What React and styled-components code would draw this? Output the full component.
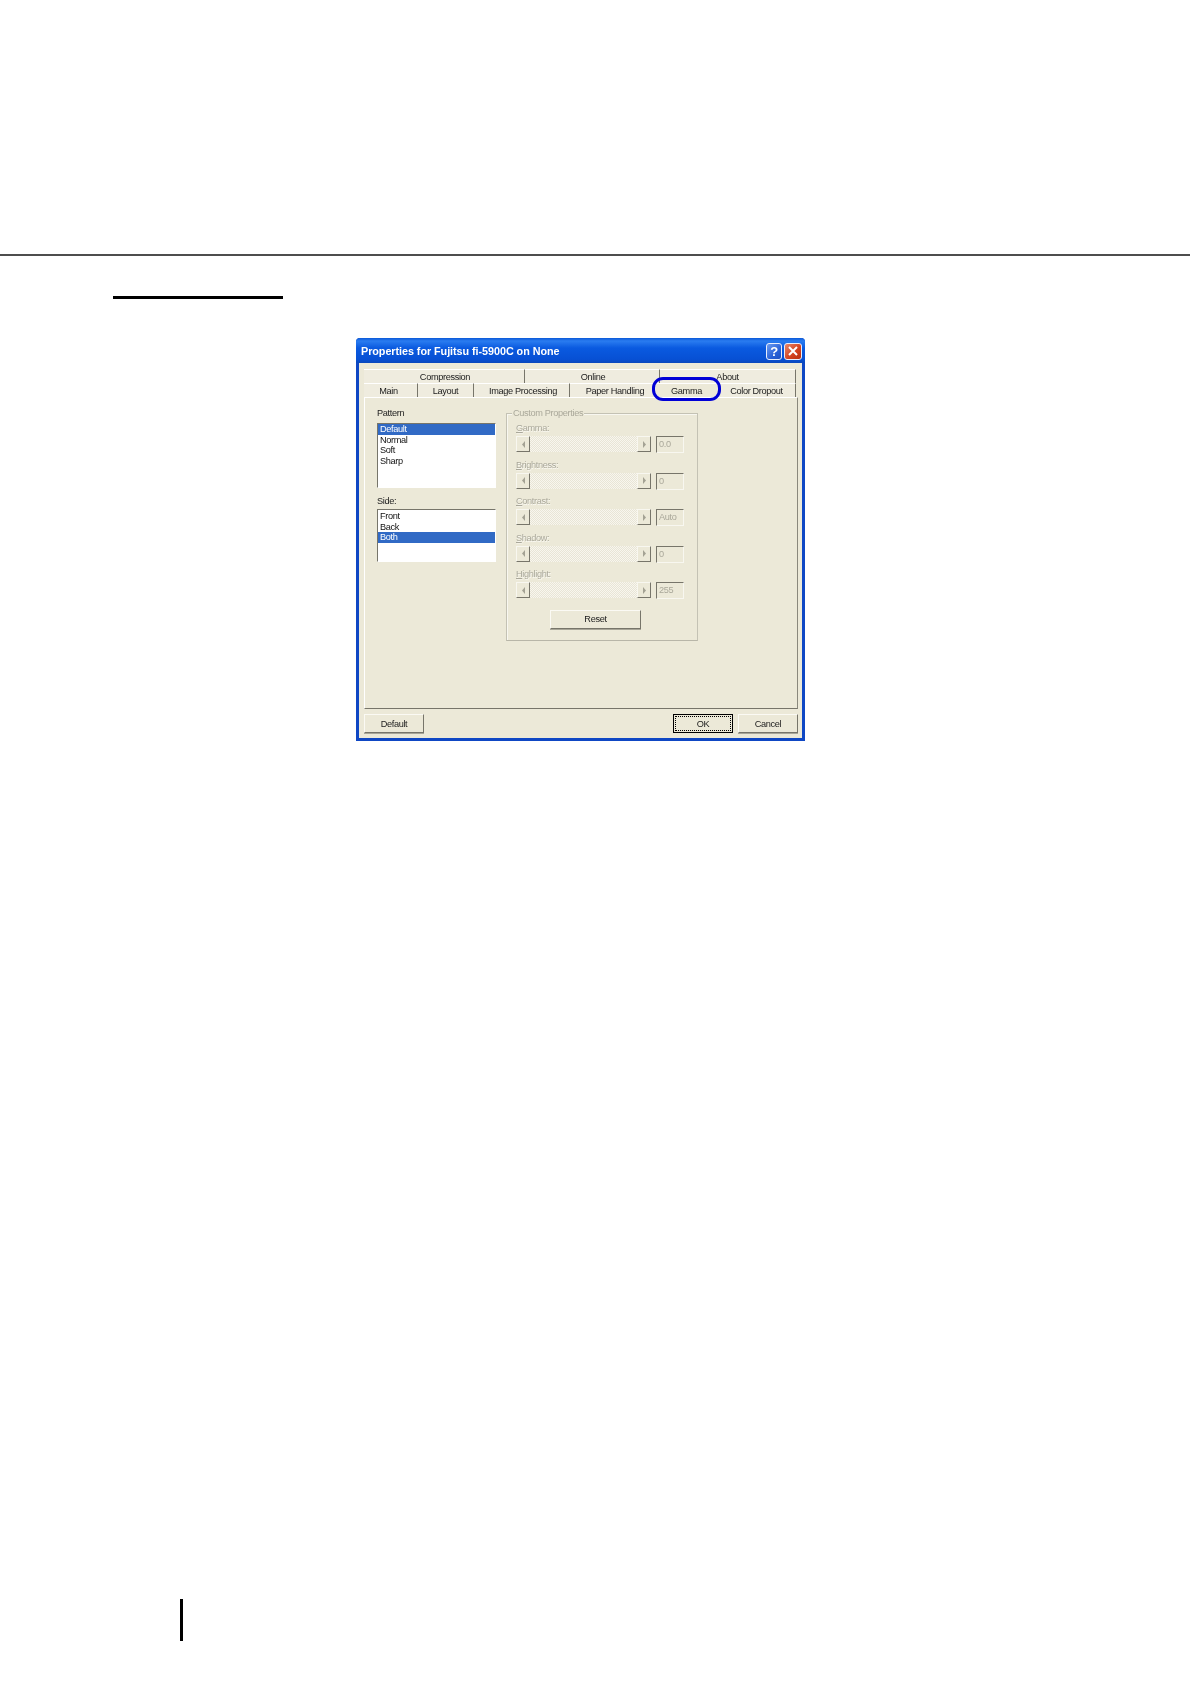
import React from 'react'
import styled, { createGlobalStyle } from 'styled-components'

const GlobalStyle = createGlobalStyle`
  html, body {
    margin: 0;
    padding: 0;
    background: #fff;
  }
`

const Page = styled.div`
  width: 1190px;
  height: 1684px;
  display: flex;
  flex-direction: column;
  padding-top: 254px;
  box-sizing: border-box;
  background: #fff;
  overflow: hidden;
`

const HeaderRule = styled.div`
  height: 2px;
  background: #4d4d4d;
`

const SectionRule = styled.div`
  width: 170px;
  height: 3px;
  margin: 40px 0 0 113px;
  background: #000;
`

const Dialog = styled.div`
  width: 449px;
  height: 403px;
  margin: 39px 0 0 356px;
  box-sizing: border-box;
  display: flex;
  flex-direction: column;
  background: #ece9d8;
  border: 3px solid #0f47c4;
  border-top: 0;
  border-radius: 4px 4px 0 0;
  font-family: "Liberation Sans", Arial, sans-serif;
  font-size: 9.2px;
  letter-spacing: -0.35px;
  color: #1c1c1c;
  filter: blur(0.4px);
`

const TitleBar = styled.div`
  height: 25px;
  margin: 0 -3px;
  padding: 1px 3px 0 5px;
  box-sizing: border-box;
  display: flex;
  align-items: center;
  justify-content: space-between;
  border-radius: 4px 4px 0 0;
  background: linear-gradient(#0a58d8 0%, #2a7cf0 12%, #0a5ae0 40%, #0750d4 85%, #0a48bc 100%);
`

const Title = styled.span`
  font-size: 10.8px;
  font-weight: 700;
  letter-spacing: -0.05px;
  color: #fff;
`

const TitleButtons = styled.div`
  display: flex;
  gap: 2px;
`

const TitleButton = styled.div`
  width: ${p => p.$wide ? 18 : 16}px;
  height: 17px;
  box-sizing: border-box;
  display: flex;
  align-items: center;
  justify-content: center;
  border: 1px solid #e8eefc;
  border-radius: 3px;
  background: ${p => p.$close ? 'linear-gradient(135deg, #e8886c, #d2401c 60%, #b83010)' : 'linear-gradient(135deg, #6c9cf0, #2a62d8 60%, #2050c0)'};
  color: #fff;
  font-size: 13px;
  font-weight: 700;
`

const Body = styled.div`
  flex: 1;
  display: flex;
  flex-direction: column;
  padding: 6px 4px 5px 5px;
`

const TabStrip = styled.div`
  position: relative;
`

const TabRow = styled.div`
  height: 14px;
  display: flex;
`

const Tab = styled.div`
  width: ${p => p.$w}px;
  box-sizing: border-box;
  padding: 1px ${p => p.$pr || 0}px 0 ${p => p.$pl || 0}px;
  line-height: 12px;
  text-align: center;
  background: ${p => p.$active ? 'transparent' : '#efecdf'};
  border-top: 1px solid #fff;
  border-right: ${p => p.$plain ? '0' : '1px solid #77756a'};
`

const Highlight = styled.div`
  position: absolute;
  left: 288px;
  top: 8px;
  width: 69px;
  height: 24px;
  box-sizing: border-box;
  border: 3.5px solid #0000d6;
  border-radius: 11px;
`

const Panel = styled.div`
  flex: 1;
  display: flex;
  gap: 10px;
  padding: 9px 0 0 12px;
  border: 1px solid #fff;
  border-right-color: #8a887c;
  border-bottom: 1px solid #77756a;
`

const Column = styled.div`
  width: 119px;
  display: flex;
  flex-direction: column;
`

const FieldLabel = styled.div`
  height: 12px;
  line-height: 12px;
  margin-top: ${p => p.$mt || 0}px;
`

const ListBox = styled.div`
  height: ${p => p.$h}px;
  box-sizing: border-box;
  margin-top: ${p => p.$mt}px;
  padding-top: ${p => p.$pt || 0}px;
  background: #fff;
  border: 1px solid #fff;
  border-top-color: #77756a;
  border-left-color: #77756a;
`

const ListRow = styled.div`
  height: 10.5px;
  line-height: 10.5px;
  padding-left: 2px;
  background: ${p => p.$selected ? '#316ac5' : 'transparent'};
  color: ${p => p.$selected ? '#fff' : '#111'};
`

const Group = styled.div`
  position: relative;
  width: 192px;
  height: 228px;
  margin-top: 6px;
  box-sizing: border-box;
  padding: 8px 8px 0 9px;
  display: flex;
  flex-direction: column;
  border: 1px solid #c4c2b4;
  border-bottom-color: #b8b6a8;
  box-shadow: inset 1px 1px 0 #f8f7f0;
`

const GroupTitle = styled.div`
  position: absolute;
  left: 5px;
  top: -7px;
  padding: 0 1px;
  line-height: 12px;
  background: #ece9d8;
  color: #aaa89a;
`

const SliderBlock = styled.div`
  display: flex;
  flex-direction: column;
  gap: 2px;
  height: 36.5px;
`

const DisabledLabel = styled.div`
  height: 12px;
  line-height: 12px;
  color: #aaa89a;
  text-shadow: 0.5px 0.5px 0 #fbfaf4;
`

const SliderRow = styled.div`
  display: flex;
  gap: 5px;
`

const ScrollBar = styled.div`
  width: 135px;
  height: 16px;
  display: flex;
  justify-content: space-between;
  background-color: #f8f6ee;
  background-image: conic-gradient(#e8e5d6 25%, transparent 0 50%, #e8e5d6 0 75%, transparent 0);
  background-size: 2px 2px;
`

const ArrowButton = styled.div`
  width: 14px;
  height: 16px;
  box-sizing: border-box;
  display: flex;
  align-items: center;
  justify-content: center;
  background: #ece9d8;
  border: 1px solid #f8f7f0;
  border-right-color: #77756a;
  border-bottom-color: #77756a;
`

const ValueBox = styled.div`
  width: 28px;
  height: 17px;
  box-sizing: border-box;
  padding-left: 2px;
  line-height: 15px;
  color: #aaa89a;
  border: 1px solid #f8f7f0;
  border-top-color: #77756a;
  border-left-color: #77756a;
`

const PushButton = styled.button`
  width: ${p => p.$w}px;
  height: 19px;
  margin-left: ${p => p.$ml || 0}px;
  margin-top: ${p => p.$mt || 0}px;
  padding: 0;
  box-sizing: border-box;
  background: #ece9d8;
  font: inherit;
  letter-spacing: inherit;
  color: #1c1c1c;
  border: 1px solid #fbfaf4;
  border-right-color: #77756a;
  border-bottom-color: #77756a;
  box-shadow: 0 1px 0 #a8a698;
`

const FocusButton = styled(PushButton)`
  border: 1px solid #000;
  box-shadow: none;
  outline: 1px dotted #000;
  outline-offset: -3px;
`

const Footer = styled.div`
  display: flex;
  align-items: center;
  gap: 5px;
  margin-top: 5px;
`

const Spacer = styled.div`
  flex: 1;
`

const PageMark = styled.div`
  width: 3px;
  height: 42px;
  margin: auto 0 43px 180px;
  background: #000;
`

const tabsBack = [
  { label: 'Compression', w: 161, pl: 2 },
  { label: 'Online', w: 135, pl: 2 },
  { label: 'About', w: 136 },
]

const tabsFront = [
  { label: 'Main', w: 54, pr: 4 },
  { label: 'Layout', w: 56 },
  { label: 'Image Processing', w: 96, pl: 3 },
  { label: 'Paper Handling', w: 82, pl: 8, plain: true },
  { label: 'Gamma', w: 69, active: true, plain: true },
  { label: 'Color Dropout', w: 75, pr: 3 },
]

const sliders = [
  { label: 'Gamma:', value: '0.0' },
  { label: 'Brightness:', value: '0' },
  { label: 'Contrast:', value: 'Auto' },
  { label: 'Shadow:', value: '0' },
  { label: 'Highlight:', value: '255' },
]

const Arrow = ({ right }) => (
  <svg width="5" height="7" viewBox="0 0 5 7">
    <polygon points={right ? '1,0 4,3.5 1,7' : '4,0 1,3.5 4,7'} fill="#a4a294" />
  </svg>
)

const CloseIcon = () => (
  <svg width="10" height="10" viewBox="0 0 10 10">
    <path d="M1 1 L9 9 M9 1 L1 9" stroke="#fff" strokeWidth="2" />
  </svg>
)

export default function App() {
  return (
    <Page>
      <GlobalStyle />
      <HeaderRule />
      <SectionRule />
      <Dialog>
        <TitleBar>
          <Title>Properties for Fujitsu fi-5900C on None</Title>
          <TitleButtons>
            <TitleButton>?</TitleButton>
            <TitleButton $close $wide><CloseIcon /></TitleButton>
          </TitleButtons>
        </TitleBar>
        <Body>
          <TabStrip>
            <TabRow>
              {tabsBack.map(t => <Tab key={t.label} $w={t.w} $pl={t.pl}>{t.label}</Tab>)}
            </TabRow>
            <TabRow>
              {tabsFront.map(t => (
                <Tab key={t.label} $w={t.w} $pr={t.pr} $pl={t.pl} $plain={t.plain} $active={t.active}>
                  {t.label}
                </Tab>
              ))}
            </TabRow>
            <Highlight />
          </TabStrip>
          <Panel>
            <Column>
              <FieldLabel>Pattern</FieldLabel>
              <ListBox $h={65} $mt={4}>
                <ListRow $selected>Default</ListRow>
                <ListRow>Normal</ListRow>
                <ListRow>Soft</ListRow>
                <ListRow>Sharp</ListRow>
              </ListBox>
              <FieldLabel $mt={7}>Side:</FieldLabel>
              <ListBox $h={53} $mt={2} $pt={1}>
                <ListRow>Front</ListRow>
                <ListRow>Back</ListRow>
                <ListRow $selected>Both</ListRow>
              </ListBox>
            </Column>
            <Group>
              <GroupTitle>Custom Properties</GroupTitle>
              {sliders.map(s => (
                <SliderBlock key={s.label}>
                  <DisabledLabel><u>{s.label[0]}</u>{s.label.slice(1)}</DisabledLabel>
                  <SliderRow>
                    <ScrollBar>
                      <ArrowButton><Arrow /></ArrowButton>
                      <ArrowButton><Arrow right /></ArrowButton>
                    </ScrollBar>
                    <ValueBox>{s.value}</ValueBox>
                  </SliderRow>
                </SliderBlock>
              ))}
              <PushButton $w={91} $ml={34} $mt={5}>Reset</PushButton>
            </Group>
          </Panel>
          <Footer>
            <PushButton $w={60}>Default</PushButton>
            <Spacer />
            <FocusButton $w={60}>OK</FocusButton>
            <PushButton $w={60}>Cancel</PushButton>
          </Footer>
        </Body>
      </Dialog>
      <PageMark />
    </Page>
  )
}
